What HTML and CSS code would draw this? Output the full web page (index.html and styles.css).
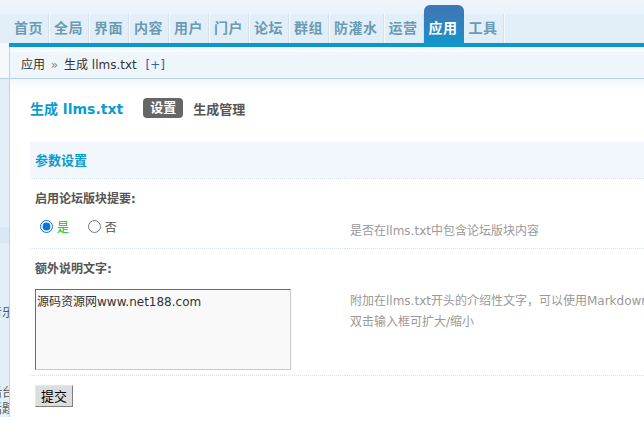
FILE: index.html
```html
<!DOCTYPE html>
<html lang="zh-CN">
  <head>
    <meta charset="UTF-8" />
    <title>生成 llms.txt</title>
    <link rel="stylesheet" href="styles.css">
  </head>
  <body>
    <div class="header">
      <ul class="nav">
        <li>首页</li>
        <li>全局</li>
        <li>界面</li>
        <li>内容</li>
        <li>用户</li>
        <li>门户</li>
        <li>论坛</li>
        <li>群组</li>
        <li>防灌水</li>
        <li>运营</li>
        <li class="active">应用</li>
        <li>工具</li>
      </ul>
    </div>

    <div class="frame">
      <div class="side">
        <div class="side-top"></div>
        <ul class="side-menu">
          <li class="on"></li>
          <li class="gap">音乐</li>
          <li class="gap2">后台</li>
          <li>话题</li>
        </ul>
      </div>

      <div class="main">
        <div class="crumbs">
          应用 <em>»</em> 生成 llms.txt <a class="toggle">[+]</a>
        </div>

        <div class="container">
          <div class="itemtitle">
            <h3>生成 llms.txt</h3>
            <span class="current">设置</span>
            <span class="tab">生成管理</span>
          </div>

          <form class="settings">
            <table class="tb">
              <tr class="partition">
                <th colspan="2">参数设置</th>
              </tr>
              <tr class="label-row">
                <td colspan="2">启用论坛版块提要:</td>
              </tr>
              <tr class="value-row">
                <td class="vtop">
                  <label class="checked"><input type="radio" name="forums" checked> 是</label>
                  <label><input type="radio" name="forums"> 否</label>
                </td>
                <td class="tips">是否在llms.txt中包含论坛版块内容</td>
              </tr>
              <tr class="label-row">
                <td colspan="2">额外说明文字:</td>
              </tr>
              <tr class="value-row">
                <td class="vtop area">
                  <textarea name="intro">源码资源网www.net188.com</textarea>
                </td>
                <td class="tips">附加在llms.txt开头的介绍性文字，可以使用Markdown格式<br>双击输入框可扩大/缩小</td>
              </tr>
            </table>
            <button type="button" class="btn">提交</button>
          </form>
        </div>
      </div>
    </div>
  </body>
</html>
```

FILE: styles.css
```css
html {
  font-size: 100%;
}

body {
  margin: 0;
  overflow: hidden;
  background: #fff;
  color: #333;
  font: 12px "DejaVu Sans", "Noto Sans CJK SC", sans-serif;
}

ul {
  margin: 0;
  padding: 0;
  list-style: none;
}

* {
  box-sizing: border-box;
}

/* top navigation */
.header {
  height: 43px;
  padding-top: 14px;
  background: linear-gradient(#eef5fb 0, #eaf3fa 14px, #e3eff8 14px, #e1eef8 100%);
}

.nav {
  display: flex;
  padding-left: 9px;
}

.nav li {
  height: 29px;
  padding: 0 5px;
  line-height: 28px;
  font-size: 14px;
  font-weight: bold;
  letter-spacing: 0.5px;
  color: #6b9ab3;
  border-right: 1px solid #d2e3ee;
  box-shadow: 1px 0 0 #f4f9fc;
}

.nav li.active {
  position: relative;
  height: 42px;
  margin-top: -9px;
  padding-top: 9px;
  color: #fff;
  border-right-color: transparent;
  box-shadow: none;
  border-radius: 6px 6px 0 0;
  background: linear-gradient(#3f76b3, #2a86c1 60%, #0a9bcc);
}

/* frame */
.frame {
  display: flex;
}

.side {
  width: 9px;
  flex: none;
  overflow: hidden;
  background: #e3eff8;
}

.side-top {
  height: 36px;
  background: #f5f9fc;
  border-bottom: 1px solid #b6d1e3;
}

.side-menu {
  padding-top: 148px;
  color: #555;
}

.side-menu li {
  width: 9px;
  height: 16px;
  line-height: 16px;
  white-space: nowrap;
  text-indent: -10px;
}

.side-menu li.on {
  background: #d8e9f5;
}

.side-menu li.gap {
  margin-top: 62px;
}

.side-menu li.gap2 {
  margin-top: 64px;
}

.main {
  flex: 1;
  min-width: 0;
  border-left: 1px solid #bcd6e8;
}

.main::before {
  content: "";
  display: block;
  height: 4px;
  margin-left: -1px;
  background: #0a98cb;
}

.crumbs {
  height: 32px;
  padding: 5px 0 0 11px;
  line-height: 26px;
  background: linear-gradient(#f8fbfd 0, #f8fbfd 5px, #eff6fb 5px);
  border-bottom: 1px solid #b6d1e3;
  color: #333;
}

.crumbs em {
  font-style: normal;
  color: #8a8a8a;
  margin: 0 2px;
}

.toggle {
  margin-left: 5px;
  color: #2a66a8;
}

.container {
  padding: 19px 0 0 20px;
  background: linear-gradient(#f2f7fb, #fff 12px);
}

.itemtitle {
  display: flex;
  align-items: center;
  height: 20px;
}

.itemtitle h3 {
  margin: 0 20px 0 0;
  font-size: 14px;
  color: #0a9bd0;
}

.current {
  height: 20px;
  padding: 0 7px;
  line-height: 20px;
  border-radius: 4px;
  background: #666;
  color: #fff;
  font-size: 13px;
  font-weight: bold;
}

.tab {
  margin-left: 10px;
  font-size: 13px;
  font-weight: bold;
  color: #555;
}

/* settings table */
.settings {
  margin-top: 24px;
}

.tb {
  width: 900px;
  border-collapse: collapse;
}

.tb th,
.tb td {
  padding: 0 5px;
  text-align: left;
}

.partition th {
  height: 36px;
  background: #f1f7fc;
  border-bottom: 1px dotted #d3e3ef;
  font-size: 13px;
  color: #0a9bd0;
}

.label-row td {
  padding-top: 12px;
  padding-bottom: 6px;
  line-height: 16px;
  font-weight: bold;
  color: #555;
}

.value-row td {
  border-bottom: 1px dotted #d3e3ef;
}

.value-row .vtop {
  width: 315px;
  padding-top: 4px;
  padding-bottom: 11px;
  vertical-align: top;
}

.value-row .area {
  padding-bottom: 5px;
}

.value-row .tips {
  padding-top: 8px;
  vertical-align: top;
  line-height: 21px;
  color: #999;
}

label {
  display: inline-flex;
  align-items: center;
  height: 20px;
  margin-right: 10px;
  color: #555;
}

label input {
  width: 13px;
  height: 13px;
  margin: 0 4px 0 5px;
  accent-color: #0b74d8;
}

label.checked {
  color: #00c400;
}

textarea {
  display: block;
  width: 256px;
  height: 81px;
  margin-top: 2px;
  padding: 2px 1px;
  resize: none;
  background: #f9f9f9;
  border: 1px solid;
  border-color: #6d6d6d #c9c9c9 #c9c9c9 #6d6d6d;
  color: #333;
  font: 12px "DejaVu Sans", "Noto Sans CJK SC", sans-serif;
}

.btn {
  height: 22px;
  margin: 9px 0 0 5px;
  padding: 0 5px;
  background: #ddd;
  border: 1px solid;
  border-color: #e8e8e8 #808080 #808080 #e8e8e8;
  color: #000;
  font: 13px "Noto Sans CJK SC", sans-serif;
}
```
